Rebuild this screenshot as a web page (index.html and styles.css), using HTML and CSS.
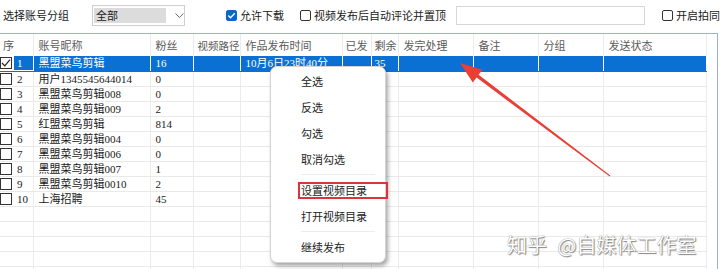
FILE: index.html
```html
<!DOCTYPE html>
<html lang="zh-CN">

<head>
    <meta charset="UTF-8">
    <title>账号分组</title>
    <link rel="stylesheet" href="styles.css">
</head>

<body>
    <div class="toolbar">
        <span class="tool-label">选择账号分组</span>
        <div class="select-box">
            <span class="select-value">全部</span>
            <svg class="chevron" width="9" height="5" viewBox="0 0 9 5"><path d="M0.5 0.5 L4.5 4.5 L8.5 0.5" fill="none" stroke="#666" stroke-width="1"/></svg>
        </div>
        <label class="opt opt-download"><span class="tick-box checked"><svg width="11" height="11" viewBox="0 0 11 11"><path d="M2.3 5.6 L4.5 7.8 L8.8 3.2" fill="none" stroke="#fff" stroke-width="1.4"/></svg></span>允许下载</label>
        <label class="opt opt-comment"><span class="tick-box"></span>视频发布后自动评论并置顶</label>
        <div class="comment-input"></div>
        <label class="opt opt-shoot"><span class="tick-box"></span>开启拍同</label>
    </div>

    <div class="grid-frame">
        <table class="grid">
            <colgroup>
                <col style="width:33px"><col style="width:117px"><col style="width:43px"><col style="width:47px">
                <col style="width:102px"><col style="width:29px"><col style="width:27px"><col style="width:75px">
                <col style="width:65px"><col style="width:65px"><col style="width:103px">
            </colgroup>
            <thead>
                <tr>
                    <th class="first">序</th><th>账号昵称</th><th>粉丝</th><th class="narrow">视频路径</th><th>作品发布时间</th>
                    <th class="tight">已发</th><th class="tight">剩余</th><th>发完处理</th><th>备注</th><th>分组</th><th>发送状态</th>
                </tr>
            </thead>
            <tbody>
                <tr class="selected">
                    <td class="first"><span class="row-box checked"><svg width="12" height="12" viewBox="0 0 12 12"><path d="M2 6 L4.8 8.8 L10 2.6" fill="none" stroke="#222" stroke-width="1.2"/></svg></span><span class="row-no">1</span></td>
                    <td>黑盟菜鸟剪辑</td><td>16</td><td></td><td>10月6日23时40分</td><td></td><td class="tight">35</td><td></td><td></td><td></td><td></td>
                </tr>
                <tr><td class="first"><span class="row-box"></span><span class="row-no">2</span></td><td>用户1345545644014</td><td>0</td><td></td><td></td><td></td><td></td><td></td><td></td><td></td><td></td></tr>
                <tr><td class="first"><span class="row-box"></span><span class="row-no">3</span></td><td>黑盟菜鸟剪辑008</td><td>0</td><td></td><td></td><td></td><td></td><td></td><td></td><td></td><td></td></tr>
                <tr><td class="first"><span class="row-box"></span><span class="row-no">4</span></td><td>黑盟菜鸟剪辑009</td><td>2</td><td></td><td></td><td></td><td></td><td></td><td></td><td></td><td></td></tr>
                <tr><td class="first"><span class="row-box"></span><span class="row-no">5</span></td><td>红盟菜鸟剪辑</td><td>814</td><td></td><td></td><td></td><td></td><td></td><td></td><td></td><td></td></tr>
                <tr><td class="first"><span class="row-box"></span><span class="row-no">6</span></td><td>黑盟菜鸟剪辑004</td><td>0</td><td></td><td></td><td></td><td></td><td></td><td></td><td></td><td></td></tr>
                <tr><td class="first"><span class="row-box"></span><span class="row-no">7</span></td><td>黑盟菜鸟剪辑006</td><td>0</td><td></td><td></td><td></td><td></td><td></td><td></td><td></td><td></td></tr>
                <tr><td class="first"><span class="row-box"></span><span class="row-no">8</span></td><td>黑盟菜鸟剪辑007</td><td>1</td><td></td><td></td><td></td><td></td><td></td><td></td><td></td><td></td></tr>
                <tr><td class="first"><span class="row-box"></span><span class="row-no">9</span></td><td>黑盟菜鸟剪辑0010</td><td>2</td><td></td><td></td><td></td><td></td><td></td><td></td><td></td><td></td></tr>
                <tr><td class="first"><span class="row-box"></span><span class="row-no">10</span></td><td>上海招聘</td><td>45</td><td></td><td></td><td></td><td></td><td></td><td></td><td></td><td></td></tr>
                <tr><td></td><td></td><td></td><td></td><td></td><td></td><td></td><td></td><td></td><td></td><td></td></tr>
                <tr><td></td><td></td><td></td><td></td><td></td><td></td><td></td><td></td><td></td><td></td><td></td></tr>
                <tr><td></td><td></td><td></td><td></td><td></td><td></td><td></td><td></td><td></td><td></td><td></td></tr>
                <tr><td></td><td></td><td></td><td></td><td></td><td></td><td></td><td></td><td></td><td></td><td></td></tr>
                <tr><td></td><td></td><td></td><td></td><td></td><td></td><td></td><td></td><td></td><td></td><td></td></tr>
            </tbody>
        </table>
    </div>

    <!-- right click menu -->
    <div class="context-menu">
        <div class="menu-item">全选</div>
        <div class="menu-item">反选</div>
        <div class="menu-item">勾选</div>
        <div class="menu-item">取消勾选</div>
        <div class="menu-sep"></div>
        <div class="menu-item">设置视频目录</div>
        <div class="menu-item">打开视频目录</div>
        <div class="menu-sep"></div>
        <div class="menu-item">继续发布</div>
        <div class="mark-box"></div>
    </div>

    <!-- annotation arrow -->
    <svg class="arrow" width="720" height="269" viewBox="0 0 720 269">
        <polygon points="460,63 482.4,69.8 478.6,74.8 610.3,175.6 609.7,176.4 476.6,77.6 472.8,82.6" fill="#ea3f36"/>
    </svg>

    <div class="watermark">知乎 @自媒体工作室</div>
</body>

</html>
```

FILE: styles.css
```css
/* Basic reset */
* {
    margin: 0;
    padding: 0;
    box-sizing: border-box;
}

body {
    font-family: "Noto Sans CJK SC", sans-serif;
    font-size: 11px;
    color: #1a1a1a;
    background: #fff;
    width: 720px;
    height: 269px;
    overflow: hidden;
    position: relative;
}

/* Toolbar */
.toolbar {
    display: flex;
    align-items: center;
    height: 33px;
    padding-bottom: 3px;
    white-space: nowrap;
}

.tool-label {
    margin-left: 3px;
}

.select-box {
    display: flex;
    align-items: center;
    margin-left: 23px;
    width: 93px;
    height: 21px;
    border: 1px solid #cfcfcf;
    padding-left: 1px;
}

.select-value {
    width: 73px;
    height: 15px;
    line-height: 15px;
    background: #dcdcdc;
    padding-left: 2px;
}

.chevron {
    margin-left: 9px;
}

.opt {
    display: flex;
    align-items: center;
    gap: 3px;
}

.opt-download {
    margin-left: 41px;
}

.opt-comment {
    margin-left: 16px;
}

.opt-shoot {
    margin-left: 17px;
}

.tick-box {
    display: inline-block;
    width: 11px;
    height: 11px;
    border: 1px solid #333;
    border-radius: 2px;
    background: #fff;
}

.tick-box.checked {
    border-color: #0a67c8;
    background: #0a67c8;
}

.tick-box svg {
    display: block;
    margin: -1px;
}

.comment-input {
    margin-left: 10px;
    width: 189px;
    height: 19px;
    border: 1px solid #d6d6d6;
}

/* Account grid */
.grid-frame {
    width: 718px;
    height: 236px;
    border-top: 1px solid #9db2c6;
    border-right: 1px solid #9db2c6;
    overflow: hidden;
}

.grid {
    width: 706px;
    table-layout: fixed;
    border-collapse: collapse;
    font-family: "Liberation Serif", "Noto Sans CJK SC", serif;
}

.grid th,
.grid td {
    padding: 0 0 0 5px;
    text-align: left;
    white-space: nowrap;
    overflow: hidden;
    border-right: 1px solid #ececec;
}

.grid th {
    height: 22px;
    font-weight: normal;
    color: #5a5a5a;
    font-family: "Noto Sans CJK SC", sans-serif;
}

.grid td {
    height: 15px;
    line-height: 14px;
    border-bottom: 1px solid #e9e9e9;
}

.grid .first {
    padding-left: 3px;
}

.grid td.first {
    padding-left: 0;
}

.grid .tight {
    padding-left: 3px;
}

.grid th.narrow {
    padding-left: 4px;
    font-size: 10.5px;
}

.row-box {
    display: inline-block;
    vertical-align: top;
    width: 12px;
    height: 12px;
    margin-top: 1px;
    border: 1px solid #333;
    background: #fff;
}

.row-box svg {
    display: block;
    margin: -1px;
}

.row-no {
    display: inline-block;
    padding-left: 5px;
}

.grid tr.selected td {
    background: #0b70d3;
    color: #fff;
    border-right-color: #fff;
    border-bottom-color: #0b70d3;
}

.grid tr.selected td.first {
    background: #fff;
}

.grid tr.selected .row-no {
    margin-left: 2px;
    padding-left: 3px;
    width: 19px;
    background: #0b70d3;
}

/* Context menu */
.context-menu {
    position: absolute;
    left: 270px;
    top: 66px;
    width: 116px;
    height: 197px;
    padding-top: 1px;
    background: #fff;
    border: 1px solid #d4d4d4;
    border-radius: 7px;
    box-shadow: 2px 3px 4px rgba(0, 0, 0, 0.35);
    font-size: 11px;
    color: #222;
}

.menu-item {
    height: 26px;
    line-height: 26px;
    padding-left: 30px;
}

.menu-sep {
    height: 1px;
    margin: 2px 10px 2px 30px;
    background: #ececec;
}

.mark-box {
    position: absolute;
    left: 27px;
    top: 115px;
    width: 90px;
    height: 17px;
    border: 2px solid #dc343c;
}

.arrow {
    position: absolute;
    left: 0;
    top: 0;
    pointer-events: none;
}

.watermark {
    position: absolute;
    left: 507px;
    top: 230px;
    font-size: 20px;
    word-spacing: 6px;
    color: #fff;
    text-shadow: 0 0 1px #666, 1px 1px 1px #888;
}
```
